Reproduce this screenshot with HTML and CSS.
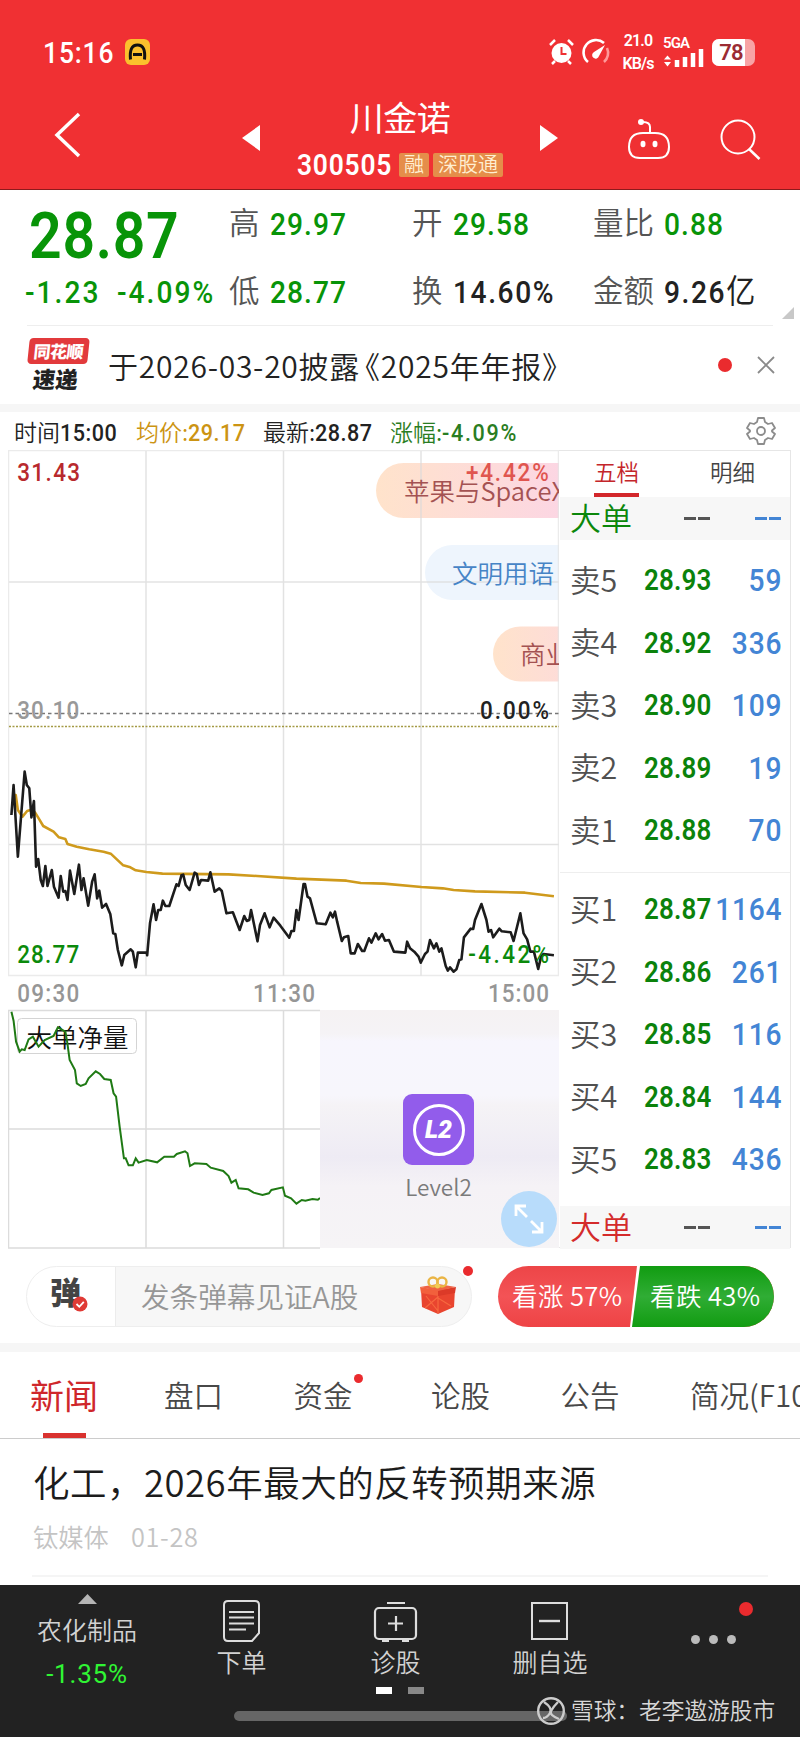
FILE: index.html
```html
<!DOCTYPE html>
<html lang="zh-CN">
<head>
<meta charset="utf-8">
<title>川金诺 300505</title>
<link rel="stylesheet" href="styles.css">
</head>
<body>
<header class="top">
  <div class="status">
    <span class="clock">15:16</span>
    <svg class="app-badge" width="25" height="26" viewBox="0 0 25 26"><rect width="25" height="26" rx="6" fill="#fbc02d"/><path d="M5.500 20.500Q4 6 12.500 6T19.500 20.500M8 15.500h9" fill="none" stroke="#111" stroke-width="3"/></svg>
    <svg class="alarm" width="27" height="28" viewBox="0 0 27 28"><circle cx="13.500" cy="15" r="10" fill="#fff"/><path d="M2 7l5-5M25 7l-5-5M7 23l-3 3M20 23l3 3" stroke="#fff" stroke-width="2.500"/><path d="M13.500 9v7h5" fill="none" stroke="#ef3033" stroke-width="2"/></svg>
    <svg class="gauge" width="29" height="28" viewBox="0 0 29 28"><path d="M6 24A12 12 0 1 1 22 5" fill="none" stroke="#fff" stroke-width="2.600"/><path d="M25 10a12 12 0 0 1-3 14" fill="none" stroke="#f99" stroke-width="2.600"/><path d="M23 7l-6 11a3.500 3.500 0 1 1-5-4z" fill="#fff"/></svg>
    <span class="rate"><b>21.0</b><b>KB/s</b></span>
    <span class="signal"><b>5GA</b><svg width="42" height="20" viewBox="0 0 42 20"><path d="M1 10.500l3.500-4 3.500 4zM1 13l3.500 4.500 3.500-4.500z" fill="#fff"/><path d="M14 18v-7M22 18V8M30 18V4M38 18V0" stroke="#fff" stroke-width="4.500"/></svg></span>
    <span class="battery"><span class="battery-fill">78</span></span>
  </div>
  <div class="nav">
    <svg class="back" width="28" height="46" viewBox="0 0 28 46"><path d="M25 2L3 23l22 21" fill="none" stroke="#fff" stroke-width="3.500"/></svg>
    <svg class="prev" width="18" height="26" viewBox="0 0 18 26"><path d="M18 0v26L0 13z" fill="#fff"/></svg>
    <div class="stock">
      <div class="stock-name">川金诺</div>
      <div class="stock-code"><span class="code">300505</span><span class="tag">融</span><span class="tag">深股通</span></div>
    </div>
    <svg class="next" width="18" height="26" viewBox="0 0 18 26"><path d="M0 0v26l18-13z" fill="#fff"/></svg>
    <svg class="robot" width="46" height="42" viewBox="0 0 46 42"><g fill="none" stroke="#fff" stroke-width="2"><path d="M17 15h12q14 0 14 14 0 11-11 11H14Q3 40 3 29 3 15 17 15zM24 14V9q0-5-7-5"/></g><circle cx="15" cy="4" r="3" fill="#fff"/><ellipse cx="17" cy="26" rx="2.500" ry="3.200" fill="#fff"/><ellipse cx="29" cy="26" rx="2.500" ry="3.200" fill="#fff"/></svg>
    <svg class="search" width="42" height="42" viewBox="0 0 42 42"><circle cx="18" cy="18" r="16.500" fill="none" stroke="#fff" stroke-width="2"/><path d="M29 30l10.500 10" stroke="#fff" stroke-width="2.500"/></svg>
  </div>
</header>

<section class="quote">
  <div class="price-block">
    <div class="price">28.87</div>
    <div class="change"><span>-1.23</span><span>-4.09%</span></div>
  </div>
  <div class="stats">
    <div class="stat"><span class="k">高</span><span class="v">29.97</span></div>
    <div class="stat"><span class="k">开</span><span class="v">29.58</span></div>
    <div class="stat"><span class="k">量比</span><span class="v">0.88</span></div>
    <div class="stat"><span class="k">低</span><span class="v">28.77</span></div>
    <div class="stat"><span class="k">换</span><span class="v dark">14.60%</span></div>
    <div class="stat"><span class="k">金额</span><span class="v dark">9.26<span class="unit">亿</span></span></div>
  </div>
  <span class="corner"></span>
</section>

<section class="bulletin">
  <div class="brand"><span class="brand-top">同花顺</span><span class="brand-bottom">速递</span></div>
  <span class="bulletin-text">于2026-03-20披露<span class="open">《</span>2025年年报》</span>
  <span class="dot"></span>
  <svg class="close" width="18" height="18" viewBox="0 0 18 18"><path d="M1 1l16 16M17 1L1 17" stroke="#8a8a8a" stroke-width="1.800"/></svg>
</section>

<section class="infobar">
  <span class="i-time">时间<b>15:00</b></span>
  <span class="i-avg">均价:<b>29.17</b></span>
  <span class="i-last">最新:<b>28.87</b></span>
  <span class="i-chg">涨幅:<b>-4.09%</b></span>
  <svg class="gear" width="30" height="30" viewBox="0 0 30 30"><g fill="none" stroke="#8c8c8c" stroke-width="1.800" stroke-linejoin="round"><path d="M12 2h6l1 4 3 2 4-1 3 5-3 2.500v1L29 18l-3 5-4-1-3 2-1 4h-6l-1-4-3-2-4 1-3-5 3-2.500v-1L1 12l3-5 4 1 3-2z"/><circle cx="15" cy="15" r="4"/></g></svg>
</section>

<main class="market">
  <div class="charts">
    <svg class="main-chart" width="551" height="558" viewBox="8 450 551 558">
      <defs>
        <linearGradient id="warm" gradientUnits="userSpaceOnUse" x1="376" x2="560" y1="0" y2="0"><stop offset="0" stop-color="#ffe3cb"/><stop offset="1" stop-color="#fcd6e3"/></linearGradient>
        <linearGradient id="warm2" gradientUnits="userSpaceOnUse" x1="493" x2="620" y1="0" y2="0"><stop offset="0" stop-color="#ffe3cb"/><stop offset="1" stop-color="#fcd6e3"/></linearGradient>
      </defs>
      <path d="M376 490.500a27.500 27.500 0 0 1 27.500-27.500H560v55H403.500a27.500 27.500 0 0 1-27.500-27.500z" fill="url(#warm)"/>
      <path d="M425 572.500a27.500 27.500 0 0 1 27.500-27.500H560v55H452.500a27.500 27.500 0 0 1-27.500-27.500z" fill="#eef5fd"/>
      <path d="M493 654a27.500 27.500 0 0 1 27.500-27.500H560v55H520.500a27.500 27.500 0 0 1-27.500-27.500z" fill="url(#warm2)"/>
      <g fill="none" stroke="#d8d8d8" stroke-opacity=".75" stroke-width="1.500"><path d="M146 451v525M283.500 451v525M421 451v525M9 582h550M9 844.500h550"/><path d="M8.500 975.500V450.500H558.500V975.500z" stroke="#e4e4e4"/></g>
      <path d="M9 713.500h550" stroke="#777" stroke-width="1.300" stroke-dasharray="3.500 3"/>
      <path d="M9 726.500h550" stroke="#a39a45" stroke-width="1.300" stroke-dasharray="2 1.500"/>
      <g class="bubble"><text x="404" y="500.500" fill="#a45252">苹果与SpaceX</text><text x="452" y="582.500" fill="#4684c6">文明用语</text><text x="520" y="664" fill="#a45252">商业</text></g>
      <g transform="translate(0 730) scale(.35714 .33333)" fill="none" stroke-linejoin="round">
        <polyline class="line" stroke="#cf9a1c" points="38,195 44,195 50,240 63,260 76,243 85,240 98,247 110,268 121,288 150,305 165,322 183,327 189,342 215,350 250,358 290,365 310,371 345,406 365,412 380,421 410,426 455,431 640,433 720,438 830,446 970,452 1010,459 1075,461 1180,471 1240,475 1270,480 1330,484 1470,488 1551,499"/>
        <polyline class="line" stroke="#1c1c1c" points="32,255 38,165 50,380 69,125 75,165 82,175 88,262 95,213 101,410 107,387 114,450 120,468 127,408 133,468 145,420 151,470 164,503 170,438 177,485 183,483 189,510 196,422 208,492 221,404 228,480 234,445 247,527 258,455 265,433 272,505 278,482 286,533 297,522 309,553 317,610 323,612 330,660 341,706 348,675 366,658 372,665 380,712 386,668 411,668 412,676 420,580 430,523 437,570 443,540 450,540 456,512 463,528 474,528 494,463 500,468 508,436 513,434 520,465 531,480 545,428 551,432 557,465 563,450 583,452 589,427 601,485 614,475 621,483 634,550 652,547 671,600 684,558 691,573 698,570 703,540 721,634 728,585 741,550 755,592 766,563 785,587 810,623 816,603 823,603 830,540 836,570 850,462 854,462 861,500 868,505 887,580 912,583 925,548 932,562 938,545 944,575 957,633 963,622 975,618 982,670 993,670 1002,642 1014,663 1020,663 1033,625 1040,638 1052,610 1060,628 1070,612 1078,632 1089,630 1103,665 1135,668 1140,635 1148,655 1160,665 1172,680 1178,698 1190,672 1197,665 1204,630 1215,655 1222,640 1230,665 1236,655 1248,708 1254,722 1260,712 1270,725 1278,718 1286,690 1292,688 1299,622 1318,596 1325,597 1330,570 1348,522 1362,570 1368,605 1375,600 1381,622 1398,596 1405,604 1430,607 1438,633 1457,550 1466,610 1476,628 1485,665 1495,665 1507,717 1515,680 1522,672 1551,676"/>
      </g>
      <g class="axis" transform="scale(.88 1)">
        <text x="19.500" y="481" textLength="71.500" fill="#b8292d">31.43</text><text x="529.500" y="481" textLength="94" fill="#e0554f">+4.42%</text>
        <text x="19.500" y="719" textLength="70.500" fill="#999">30.10</text><text x="545.500" y="719" textLength="78.500" fill="#222">0.00%</text>
        <text x="19.500" y="963" textLength="70.500" fill="#0b8a0b">28.77</text><text x="532" y="963" textLength="92" fill="#0b8a0b">-4.42%</text>
        <g fill="#969696"><text x="19.500" y="1002" textLength="70.500">09:30</text><text x="287.500" y="1002" textLength="70.500">11:30</text><text x="554.500" y="1002" textLength="69.500">15:00</text></g>
      </g>
    </svg>
    <div class="sub">
      <svg class="sub-chart" width="312" height="240" viewBox="8 1009 312 240">
        <path d="M146 1010v238M283.500 1010v238M9 1129h311M320 1010.500H8.500V1248H320" fill="none" stroke="#dcdcdc" stroke-width="1.500"/>
        <rect x="17.500" y="1018.500" width="119" height="35" rx="4" fill="#fff" stroke="#d4d4d4"/>
        <text class="sub-label" x="26.500" y="1046.500">大单净量</text>
        <g transform="translate(0 1000) scale(.35714 .33333)"><polyline class="line thin" fill="none" stroke="#1f7a14" points="32,35 38,62 45,125 55,155 61,148 69,150 80,118 92,110 108,140 125,120 150,108 162,82 183,95 188,125 195,180 210,210 215,250 226,258 240,252 248,235 268,214 280,222 292,237 310,240 318,280 325,290 335,380 347,475 352,475 360,496 372,496 380,475 388,488 411,480 440,487 460,470 487,470 495,462 518,454 525,460 532,498 545,490 578,492 590,503 625,513 640,528 648,548 660,540 668,565 695,568 710,578 735,585 753,580 760,570 792,562 798,587 815,595 830,611 845,600 855,602 875,597 890,599 896,594"/></g>
      </svg>
      <div class="level2">
        <div class="l2-icon"><span>L2</span></div>
        <div class="l2-name">Level2</div>
        <span class="expand"><svg width="30" height="30" viewBox="0 0 30 30"><path d="M13 13L3 3M2 12V2h10M17 17l10 10M28 18v10H18" fill="none" stroke="#fff" stroke-width="2.800"/></svg></span>
      </div>
    </div>
  </div>
  <aside class="book">
    <div class="book-tabs"><span class="on">五档</span><span>明细</span></div>
    <div class="row big up"><span>大单</span><i class="dash"></i><i class="dash blue"></i></div>
    <div class="side sell">
      <div class="row"><span>卖5</span><b>28.93</b><em>59</em></div>
      <div class="row"><span>卖4</span><b>28.92</b><em>336</em></div>
      <div class="row"><span>卖3</span><b>28.90</b><em>109</em></div>
      <div class="row"><span>卖2</span><b>28.89</b><em>19</em></div>
      <div class="row"><span>卖1</span><b>28.88</b><em>70</em></div>
    </div>
    <div class="side buy">
      <div class="row"><span>买1</span><b>28.87</b><em>1164</em></div>
      <div class="row"><span>买2</span><b>28.86</b><em>261</em></div>
      <div class="row"><span>买3</span><b>28.85</b><em>116</em></div>
      <div class="row"><span>买4</span><b>28.84</b><em>144</em></div>
      <div class="row"><span>买5</span><b>28.83</b><em>436</em></div>
    </div>
    <div class="row big down"><span>大单</span><i class="dash"></i><i class="dash blue"></i></div>
  </aside>
</main>

<section class="social">
  <div class="comment">
    <span class="danmu">弹<svg width="16" height="16" viewBox="0 0 16 16"><circle cx="8" cy="8" r="7.500" fill="#e03a35"/><path d="M4.500 8l2.800 2.800 4.500-5" fill="none" stroke="#fff" stroke-width="1.800"/></svg></span>
    <span class="placeholder">发条弹幕见证A股</span>
    <svg class="gift" width="38" height="38" viewBox="0 0 38 38"><path d="M2 13l17 2 17-2-1 18-16 7-16-7z" fill="#e9452f"/><path d="M1 11l18 3v6L2 17z" fill="#f2603c"/><path d="M37 11l-18 3v6l17-3z" fill="#dc3a28"/><path d="M19 20v17M6 32l13-11M32 30L19 22M7 20l12 15" stroke="#f7683f" stroke-width="1.200"/><path d="M1 11l18-3 18 3-18 4z" fill="#ef6243"/><g fill="none" stroke="#eab545" stroke-width="2.400"><circle cx="14" cy="6" r="4.500"/><circle cx="23" cy="6" r="4.500"/></g><circle cx="18.500" cy="10" r="2.500" fill="#f2cc55"/></svg>
    <span class="dot"></span>
  </div>
  <div class="votes"><span class="bull">看涨 57%</span><span class="bear">看跌 43%</span></div>
</section>

<nav class="tabs">
  <span class="tab on">新闻</span><span class="tab">盘口</span><span class="tab">资金<i class="dot"></i></span><span class="tab">论股</span><span class="tab">公告</span><span class="tab">简况(F10)</span>
</nav>

<article class="news">
  <h2>化工，2026年最大的反转预期来源</h2>
  <p><span>钛媒体</span><span>01-28</span></p>
</article>

<footer class="dock">
  <div class="dock-items">
    <div class="item sector"><svg width="19" height="10" viewBox="0 0 19 10"><path d="M0 10L9.500 0 19 10z" fill="#b5b5b5"/></svg><span>农化制品</span><span class="pct">-1.35%</span></div>
    <div class="item"><svg width="40" height="44" viewBox="0 0 40 44"><g fill="none" stroke="#ddd" stroke-width="2"><path d="M6 2h27q4 0 4 4v28l-7 8H6q-4 0-4-4V6q0-4 4-4z"/><path d="M7 13h25M7 18.500h25M7 24.500h25M7 30.500h17"/></g></svg><span>下单</span></div>
    <div class="item"><svg width="46" height="44" viewBox="0 0 46 44"><g fill="none" stroke="#ddd" stroke-width="2.200"><rect x="2" y="9" width="41" height="31" rx="4"/><path d="M14 4h18M23 17v15M15 24.500h15M9 42h7M29 42h7"/></g></svg><span>诊股</span></div>
    <div class="item"><svg width="40" height="44" viewBox="0 0 40 44"><g fill="none" stroke="#ddd" stroke-width="2"><rect x="2" y="4" width="35" height="36"/><path d="M9 22h21" stroke-width="2.400"/></g></svg><span>删自选</span></div>
    <div class="item more"><i></i><i></i><i></i><b class="dot"></b></div>
  </div>
  <div class="pager"><i></i><i></i></div>
  <div class="home"></div>
  <div class="credit"><svg width="30" height="30" viewBox="0 0 30 30"><g fill="none" stroke="#ccc" stroke-width="2.400"><circle cx="15" cy="15" r="12.800"/><path d="M8 6q9 6 6 11t-7 5M22 6q-5 5-7 9t8 8"/></g></svg><span>雪球：老李遨游股市</span></div>
</footer>
</body>
</html>
```

FILE: styles.css
```css
* { box-sizing: border-box; }
body { margin: 0; width: 800px; height: 1737px; overflow: hidden; background: #fff; color: #222; font-family: "Noto Sans CJK SC", sans-serif; font-weight: 350; }
svg { display: block; flex: none; }
b, em, i { font-style: normal; }
span { white-space: nowrap; }
.dot { display: block; background: #ea2b2e; border-radius: 50%; flex: none; }

/* Condensed numerals */
.clock, .code, .price, .change span, .stat .v, .infobar b, .row b, .row em { display: inline-block; transform: scaleX(.88); transform-origin: 0 50%; }

.top { height: 190px; background: #f03033; border-bottom: 1px solid #8d1a1c; color: #fff; font-family: Roboto, "Noto Sans CJK SC", sans-serif; }
.status { display: flex; align-items: center; height: 78px; padding: 26px 43px 0; }
.clock { font-size: 30px; font-weight: 500; letter-spacing: 1px; width: 82px; }
.alarm { margin-left: 398px; }
.gauge { margin-left: 7px; }
.rate { display: flex; flex-direction: column; width: 36px; margin-left: 9px; font-size: 16px; line-height: 24px; text-align: center; align-items: center; }
.rate b, .signal b { font-weight: 600; letter-spacing: -.9px; }
.rate { line-height: 23px; }
.signal { margin-left: 7px; font-size: 15px; line-height: 18px; height: 36px; }
.signal svg { margin-top: -3px; }
.signal b { display: block; }
.battery { display: block; width: 43px; height: 27px; margin-left: 7px; border-radius: 7px; background: #f8a3a5; overflow: hidden; }
.battery-fill { display: block; width: 33px; height: 27px; line-height: 28px; padding-left: 5px; background: #fff; color: #9b2b33; font-size: 22px; font-weight: 600; text-align: center; letter-spacing: -.7px; }
.nav { display: flex; height: 100px; margin-top: 16px; padding: 0 37px 0 54px; align-items: flex-start; }
.back { margin-top: 18px; }
.prev { margin: 31px 0 0 160px; }
.next { margin: 31px 0 0 0; }
.stock { width: 280px; text-align: center; }
.stock-name { font-size: 34px; line-height: 36px; height: 54px; padding-top: 7px; font-weight: 400; letter-spacing: -.5px; }
.stock-code { display: flex; align-items: center; height: 33px; padding-left: 37px; }
.code { font-size: 30px; font-weight: 600; letter-spacing: .9px; width: 102px; text-align: left; }
.tag { height: 24px; line-height: 24px; padding: 0 5px; margin-right: 4px; background: #e58d4a; color: #ffefd2; font-size: 20px; border-radius: 2px; }
.robot { margin: 24px 0 0 68px; }
.search { margin: 25px 0 0 48px; }

.quote { display: flex; height: 136px; position: relative; font-family: Roboto, "Noto Sans CJK SC", sans-serif; color: #089408; }
.quote::after { content: ""; position: absolute; left: 27px; right: 27px; bottom: 0; height: 1px; background: #eee; }
.price-block { width: 229px; padding: 10px 0 0 29px; }
.price { display: block; font-size: 65px; line-height: 72px; font-weight: 600; letter-spacing: .8px; }
.change { display: flex; margin-left: -4px; padding-top: 1px; font-size: 32px; line-height: 38px; font-weight: 500; }
.change span { width: 92px; letter-spacing: 2.300px; }
.stats { display: grid; grid-template-columns: 183px 181px 190px; grid-template-rows: 68px 68px; }
.stat { display: flex; align-items: center; height: 68px; font-size: 31px; }
.stat .k { color: #555; font-size: 30.500px; margin-right: 10px; line-height: 40px; }
.stat .v { font-weight: 500; letter-spacing: 1.200px; font-size: 32px; line-height: 40px; height: 40px; }
.stat .dark { color: #222; letter-spacing: 1.800px; }
.unit { font-size: 33px; line-height: 38px; font-weight: 400; }
.corner { position: absolute; right: 6px; top: 117px; border-left: 12px solid transparent; border-bottom: 12px solid #c8c8c8; }

.bulletin { display: flex; align-items: center; height: 78px; padding: 0 26px 0 27px; }
.brand { width: 60px; height: 54px; margin-right: 21px; transform: skewX(-6deg); text-align: center; font-weight: 900; }
.brand span { display: block; }
.brand-top { height: 26px; line-height: 25px; background: #e23a3c; border-radius: 4px; color: #fff; font-size: 17px; letter-spacing: -.5px; }
.brand-bottom { font-size: 22.500px; line-height: 26px; color: #222; padding-top: 1px; }
.bulletin-text { font-size: 30px; letter-spacing: .75px; line-height: 40px; padding-bottom: 1px; }
.bulletin-text .open { margin-left: -10px; }
.bulletin .dot { width: 14px; height: 14px; margin-left: auto; margin-right: 25px; }
.close { margin-right: -1px; }

.infobar { display: flex; align-items: center; box-sizing: content-box; height: 38px; border-top: 8px solid #f6f6f6; padding-left: 14px; font-size: 23px; }
.infobar b { font-family: Roboto, sans-serif; font-weight: 500; font-size: 24.500px; letter-spacing: .6px; }
.infobar span { width: 122px; }
.infobar .i-last, .infobar .i-avg { width: 127px; }
.infobar .i-avg { color: #cc9413; }
.infobar .i-chg { color: #2a7d22; }
.infobar .i-chg b { letter-spacing: 1.900px; }
.gear { margin-left: 234px; }

.market { display: flex; height: 798px; padding-left: 8px; }
.charts { width: 551px; }
.main-chart { height: 558px; }
.line { stroke-width: 2.600px; vector-effect: non-scaling-stroke; }
.thin { stroke-width: 2px; }
.axis { font: 500 25.500px Roboto, sans-serif; }
.bubble { font-size: 25.500px; }
.sub { display: flex; }
.sub-chart { margin-top: 1px; }
.sub-label { font-size: 25.500px; fill: #111; }
.level2 { position: relative; width: 239px; height: 238px; margin-top: 2px; padding: 84px 2px 0 0; display: flex; flex-direction: column; align-items: center; background: linear-gradient(#f5f2f3 0, #f5f3f6 10%, #f7f6fd 13%, #f7f6fc 36%, #f5f3f6 40%, #eeebf4 62%, #f5f2f6 74%, #f6f4f6 100%); }
.l2-icon { width: 71px; height: 71px; border-radius: 9px; background: #925ceb; display: flex; align-items: center; justify-content: center; }
.l2-icon span { width: 52px; height: 52px; border: 3px solid #fff; border-radius: 50%; color: #fff; font: italic 900 25px/46px Roboto, sans-serif; text-align: center; }
.l2-name { color: #7b7b7b; font-size: 22.500px; line-height: 30px; margin-top: 6px; }
.expand { position: absolute; right: 2px; bottom: 1px; width: 56px; height: 56px; border-radius: 50%; background: #b8dcfb; display: flex; align-items: center; justify-content: center; }

.book { width: 232px; border: 1px solid #e6e6e6; border-left: 0; height: 798px; padding-left: 1px; }
.book-tabs { display: flex; height: 46px; padding-left: 34px; font-size: 22.500px; line-height: 41px; color: #444; }
.book-tabs span { width: 45px; margin-right: 71px; }
.book-tabs .on { color: #c4262a; border-bottom: 4px solid #d3272b; }
.row { display: flex; align-items: center; height: 62.500px; padding: 0 9px 0 10px; }
.row span { flex: none; width: 74px; font-size: 30.500px; line-height: 40px; padding-bottom: 3px; color: #505050; }
.row b { flex: none; font: 600 29.500px Roboto, sans-serif; letter-spacing: .2px; color: #0b820b; width: 62px; }
.row em { font: 500 32px Roboto, sans-serif; letter-spacing: .9px; color: #4385d5; margin: 0 -1px 0 auto; transform-origin: 100% 50%; }
.row.big { height: 43px; background: #f7f7f7; }
.row.big span { font-size: 31px; line-height: 36px; width: 114px; padding-bottom: 4px; }
.row.up span { color: #0b870b; }
.row.down span { color: #d42b2b; }
.dash { width: 26px; height: 3px; background: linear-gradient(90deg, #555 12px, transparent 12px 14px, #555 14px); }
.dash.blue { margin-left: auto; background: linear-gradient(90deg, #4385d5 12px, transparent 12px 14px, #4385d5 14px); }
.sell { padding-top: 9px; height: 333px; border-bottom: 1px solid #eee; }
.buy { height: 333px; padding-top: 5px; }

.social { display: flex; align-items: center; box-sizing: content-box; height: 93px; border-bottom: 9px solid #f6f6f6; padding: 2px 26px 0; }
.comment { position: relative; display: flex; align-items: center; width: 446px; height: 61px; border: 1px solid #eee; border-radius: 31px; background: linear-gradient(90deg, #fff 88px, #ececec 88px 89px, #f7f7f7 89px); }
.danmu { position: relative; width: 88px; padding-left: 23px; font-size: 31px; font-weight: 800; line-height: 36px; color: #444; height: 48px; }
.danmu svg { position: absolute; left: 45px; top: 23px; }
.placeholder { margin-left: 26px; font-size: 28.600px; line-height: 40px; padding-bottom: 1px; color: #969696; }
.gift { margin-left: auto; margin-right: 14px; margin-top: -4px; }
.comment .dot { position: absolute; right: -2px; top: -1px; width: 10px; height: 10px; }
.votes { position: relative; display: flex; width: 276px; height: 61px; margin-left: 26px; border-radius: 31px; overflow: hidden; color: #fff; font-size: 25.500px; letter-spacing: .4px; line-height: 57px; background: linear-gradient(to bottom, #ed4547, #f35356 50%, #ee4345); }
.votes span { width: 141px; padding-left: 14px; }
.votes .bear { margin-left: -7px; width: 142px; padding-left: 18px; background: linear-gradient(to bottom, #119c11, #30ad35 50%, #119c11); clip-path: polygon(8px 0, 100% 0, 100% 100%, 0 100%); }
.votes::before { content: ""; position: absolute; left: 132px; top: 0; width: 12px; height: 61px; background: #fff; clip-path: polygon(7px 0, 100% 0, 100% 100%, 0 100%); }

.tabs { display: flex; height: 87px; border-bottom: 1px solid #ccc; padding-left: 30px; overflow: hidden; font-size: 29.500px; line-height: 85px; color: #484848; }
.tab { position: relative; flex: none; margin-right: 70.500px; }
.tab.on { font-size: 34px; color: #cf272b; font-weight: 400; margin-right: 66px; }
.tab.on::after { content: ""; position: absolute; left: 13px; bottom: 0; width: 43px; height: 5px; background: #d9322f; }
.tab:nth-child(3) { margin-right: 78.500px; }
.tab .dot { position: absolute; right: -10px; top: 22px; width: 9px; height: 9px; }

.news { height: 146px; padding: 21px 32px 0 33px; position: relative; }
.news h2 { margin: 0; font-size: 36.500px; letter-spacing: .5px; line-height: 44px; font-weight: 350; color: #1c1c1c; white-space: nowrap; }
.news p { display: flex; gap: 22px; margin: 15px 0 0; font-size: 25.300px; line-height: 34px; color: #c4c4c4; }
.news p span + span { letter-spacing: .7px; }
.news::after { content: ""; position: absolute; left: 32px; right: 32px; bottom: 8px; height: 2px; background: #f5f5f5; }

.dock { position: relative; height: 152px; background: #222; color: #d2d2d2; }
.dock-items { display: grid; grid-template-columns: 174px 135px 173px 136px 182px; font-size: 25px; line-height: 34px; height: 102px; padding-top: 14px; }
.item { display: flex; flex-direction: column; align-items: center; gap: 1px; }
.sector { margin-top: -5px; }
.sector span { margin-top: 7px; }
.sector .pct { margin-top: 10px; color: #30f534; font-size: 26px; letter-spacing: .8px; font-family: Roboto, sans-serif; font-weight: 400; }
.more { position: relative; flex-direction: row; justify-content: center; gap: 9px; height: 80px; padding-left: 9px; }
.more i { width: 9px; height: 9px; border-radius: 50%; background: #bbb; }
.more .dot { position: absolute; left: 121px; top: 3px; width: 14px; height: 14px; }
.pager { display: flex; gap: 16px; padding-left: 376px; }
.pager i { width: 16px; height: 7px; background: #fff; }
.pager i + i { background: #888; }
.home { width: 333px; height: 10px; border-radius: 5px; background: #666; margin: 17px 0 0 234px; }
.credit { position: absolute; left: 536px; top: 111px; display: flex; align-items: center; gap: 5px; height: 30px; font-size: 22.700px; color: #d8d8d8; }
.credit span { padding-bottom: 3px; }
```
